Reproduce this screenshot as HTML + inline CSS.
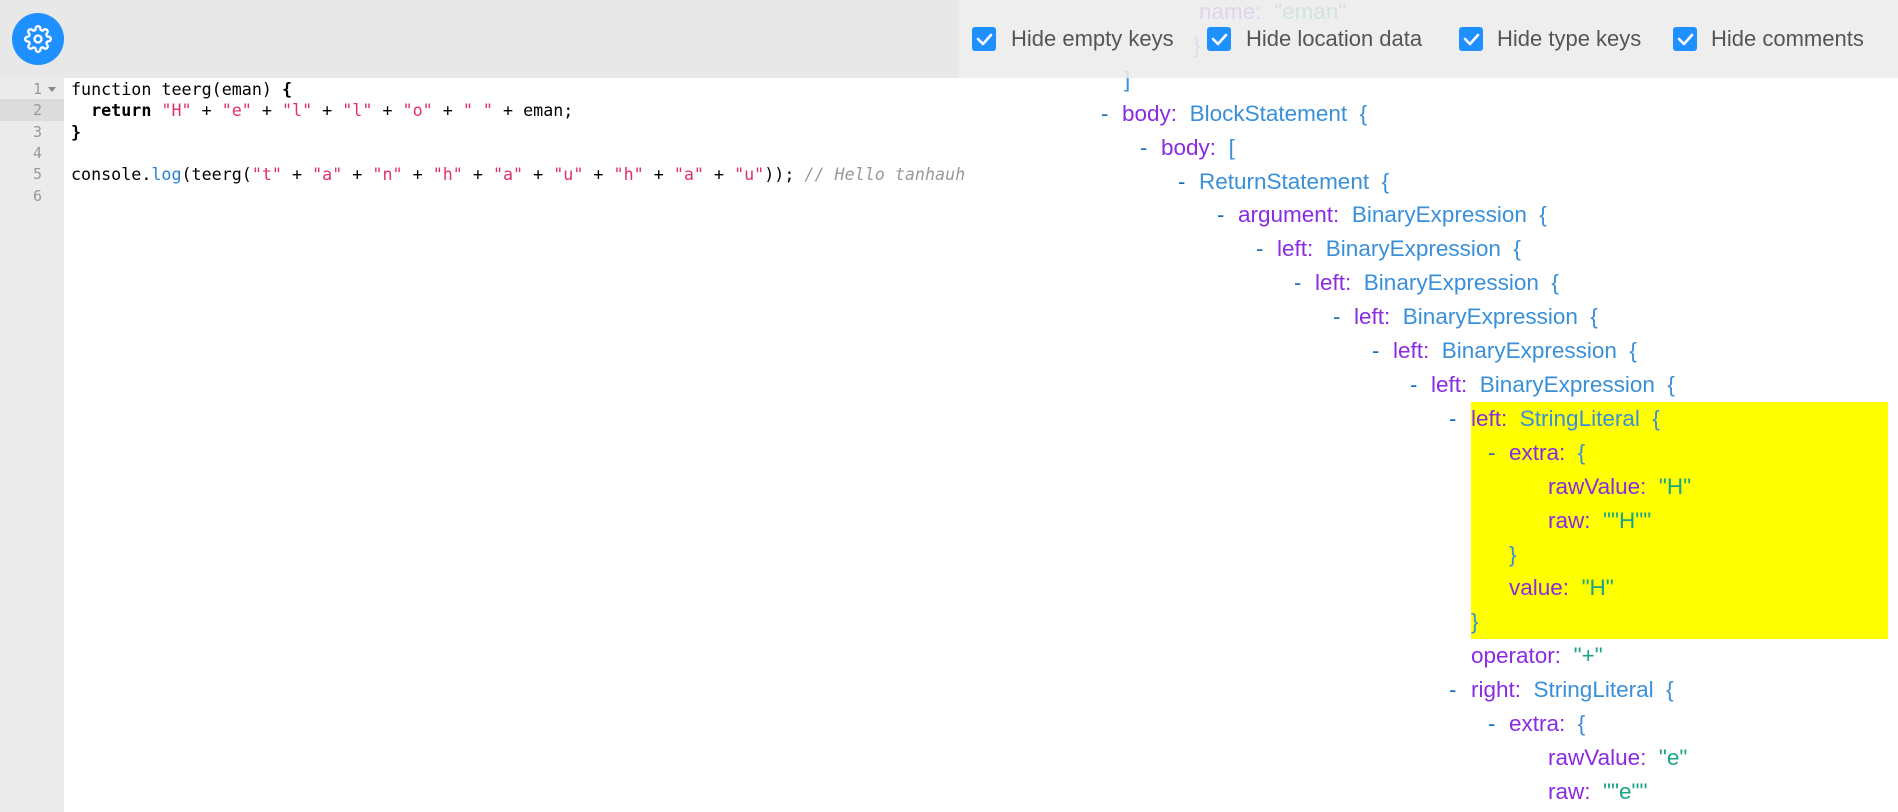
<!DOCTYPE html>
<html><head><meta charset="utf-8"><style>
*{margin:0;padding:0;box-sizing:border-box}
body{width:1898px;height:812px;overflow:hidden;background:#fff;position:relative;font-family:"Liberation Sans",sans-serif}
.topl{position:absolute;left:0;top:0;width:959px;height:78px;background:#e8e8e8;z-index:5}
.topr{position:absolute;left:959px;top:0;width:939px;height:78px;background:rgba(236,236,236,0.88);z-index:5}
.gear{position:absolute;left:12px;top:13px;width:52px;height:52px;border-radius:50%;background:#1e90ff;z-index:6;display:flex;align-items:center;justify-content:center}
.gut{position:absolute;left:0;top:78px;width:64px;height:734px;background:#ebebeb}
.ln{position:absolute;left:0;width:42px;text-align:right;font:15px "DejaVu Sans Mono",monospace;color:#999;height:21.3px;line-height:21.3px}
.code{position:absolute;left:71px;font:16.7px "DejaVu Sans Mono",monospace;color:#000;white-space:pre;height:21.3px;line-height:22.5px}
.s{color:#e0306a}.b{font-weight:bold}.f{color:#2a7fd4}.c{color:#999;font-style:italic}
.cb{position:absolute;top:27px;width:24px;height:24px;background:#1e90ff;border-radius:3px;z-index:6}
.lb{position:absolute;top:24px;font-size:22px;color:#555;z-index:6;line-height:30px}
.r{position:absolute;height:34px;line-height:36px;font-size:22.5px;white-space:pre}
.d{position:absolute;color:#1f6fb5;font-size:22px;height:34px;line-height:36px}
.k{color:#8a2be2}.t{color:#3a8fd9}.v{color:#1aa58a}.p{color:#3a8fd9}
.hl{position:absolute;left:1471px;top:402px;width:417px;height:237px;background:#ffff00}
</style></head><body>
<div class="topl"></div><div class="topr"></div>
<div class="gear"><svg width="28" height="28" viewBox="0 0 24 24" fill="none" stroke="#fff" stroke-width="2" stroke-linecap="round" stroke-linejoin="round"><circle cx="12" cy="12" r="3"/><path d="M19.4 15a1.65 1.65 0 0 0 .33 1.82l.06.06a2 2 0 1 1-2.830 2.83l-.06-.06a1.65 1.65 0 0 0-1.82-.33 1.65 1.65 0 0 0-1 1.51V21a2 2 0 1 1-4 0v-.09A1.65 1.65 0 0 0 9 19.4a1.65 1.65 0 0 0-1.82.33l-.06.06a2 2 0 1 1-2.83-2.83l.06-.06a1.65 1.65 0 0 0 .33-1.82 1.65 1.65 0 0 0-1.51-1H3a2 2 0 1 1 0-4h.09A1.65 1.65 0 0 0 4.6 9a1.65 1.65 0 0 0-.33-1.82l-.06-.06a2 2 0 1 1 2.83-2.83l.06.06a1.65 1.65 0 0 0 1.82.33H9a1.65 1.65 0 0 0 1-1.51V3a2 2 0 1 1 4 0v.09a1.65 1.65 0 0 0 1 1.51 1.65 1.65 0 0 0 1.82-.33l.06-.06a2 2 0 1 1 2.83 2.83l-.06.06a1.65 1.65 0 0 0-.33 1.82V9a1.65 1.65 0 0 0 1.51 1H21a2 2 0 1 1 0 4h-.09a1.65 1.65 0 0 0-1.51 1z"/></svg></div>

<div class="gut"></div>
<div style="position:absolute;left:0;top:99.3px;width:64px;height:21.3px;background:#dcdcdc"></div>
<div class="ln" style="top:79px">1</div><div style="position:absolute;left:48px;top:87px;border-left:4px solid transparent;border-right:4px solid transparent;border-top:5px solid #888"></div>
<div class="ln" style="top:100.3px">2</div>
<div class="ln" style="top:121.6px">3</div>
<div class="ln" style="top:142.9px">4</div>
<div class="ln" style="top:164.2px">5</div>
<div class="ln" style="top:185.5px">6</div>
<div class="code" style="top:78px">function teerg(eman) <span class="b">{</span></div>
<div class="code" style="top:99.3px">  <span class="b">return</span> <span class="s">"H"</span> + <span class="s">"e"</span> + <span class="s">"l"</span> + <span class="s">"l"</span> + <span class="s">"o"</span> + <span class="s">" "</span> + eman;</div>
<div class="code" style="top:120.6px"><span class="b">}</span></div>
<div class="code" style="top:163.2px">console.<span class="f">log</span>(teerg(<span class="s">"t"</span> + <span class="s">"a"</span> + <span class="s">"n"</span> + <span class="s">"h"</span> + <span class="s">"a"</span> + <span class="s">"u"</span> + <span class="s">"h"</span> + <span class="s">"a"</span> + <span class="s">"u"</span>)); <span class="c">// Hello tanhauh</span></div>

<svg style="position:absolute;left:0;top:0;z-index:7" width="1898" height="78">
<g fill="none" stroke="#fff" stroke-width="2.6" stroke-linecap="round" stroke-linejoin="round">
<path d="M978 39l5 5 8-9"/><path d="M1213 39l5 5 8-9"/><path d="M1465 39l5 5 8-9"/><path d="M1679 39l5 5 8-9"/></g></svg>
<div class="cb" style="left:972px"></div><div class="lb" style="left:1011px">Hide empty keys</div>
<div class="cb" style="left:1207px"></div><div class="lb" style="left:1246px">Hide location data</div>
<div class="cb" style="left:1459px"></div><div class="lb" style="left:1497px">Hide type keys</div>
<div class="cb" style="left:1673px"></div><div class="lb" style="left:1711px">Hide comments</div>

<div class="hl"></div>
<div class="r" style="left:1199px;top:-6px"><span class="k">name:</span>  <span class="v">"eman"</span></div>
<div class="r p" style="left:1193px;top:28px">}</div>
<div class="r p" style="left:1124px;top:62px">]</div>

<div class="d" style="left:1101px;top:96px">-</div><div class="r" style="left:1122px;top:96px"><span class="k">body:</span>  <span class="t">BlockStatement</span>  <span class="p">{</span></div>
<div class="d" style="left:1140px;top:130px">-</div><div class="r" style="left:1161px;top:130px"><span class="k">body:</span>  <span class="p">[</span></div>
<div class="d" style="left:1178px;top:164px">-</div><div class="r" style="left:1199px;top:164px"><span class="t">ReturnStatement</span>  <span class="p">{</span></div>
<div class="d" style="left:1217px;top:197px">-</div><div class="r" style="left:1238px;top:197px"><span class="k">argument:</span>  <span class="t">BinaryExpression</span>  <span class="p">{</span></div>
<div class="d" style="left:1256px;top:231px">-</div><div class="r" style="left:1277px;top:231px"><span class="k">left:</span>  <span class="t">BinaryExpression</span>  <span class="p">{</span></div>
<div class="d" style="left:1294px;top:265px">-</div><div class="r" style="left:1315px;top:265px"><span class="k">left:</span>  <span class="t">BinaryExpression</span>  <span class="p">{</span></div>
<div class="d" style="left:1333px;top:299px">-</div><div class="r" style="left:1354px;top:299px"><span class="k">left:</span>  <span class="t">BinaryExpression</span>  <span class="p">{</span></div>
<div class="d" style="left:1372px;top:333px">-</div><div class="r" style="left:1393px;top:333px"><span class="k">left:</span>  <span class="t">BinaryExpression</span>  <span class="p">{</span></div>
<div class="d" style="left:1410px;top:367px">-</div><div class="r" style="left:1431px;top:367px"><span class="k">left:</span>  <span class="t">BinaryExpression</span>  <span class="p">{</span></div>
<div class="d" style="left:1449px;top:401px">-</div><div class="r" style="left:1471px;top:401px"><span class="k">left:</span>  <span class="t">StringLiteral</span>  <span class="p">{</span></div>
<div class="d" style="left:1488px;top:435px">-</div><div class="r" style="left:1509px;top:435px"><span class="k">extra:</span>  <span class="p">{</span></div>
<div class="r" style="left:1548px;top:469px"><span class="k">rawValue:</span>  <span class="v">"H"</span></div>
<div class="r" style="left:1548px;top:503px"><span class="k">raw:</span>  <span class="v">""H""</span></div>
<div class="r p" style="left:1509px;top:537px">}</div>
<div class="r" style="left:1509px;top:570px"><span class="k">value:</span>  <span class="v">"H"</span></div>
<div class="r p" style="left:1471px;top:604px">}</div>
<div class="r" style="left:1471px;top:638px"><span class="k">operator:</span>  <span class="v">"+"</span></div>
<div class="d" style="left:1449px;top:672px">-</div><div class="r" style="left:1471px;top:672px"><span class="k">right:</span>  <span class="t">StringLiteral</span>  <span class="p">{</span></div>
<div class="d" style="left:1488px;top:706px">-</div><div class="r" style="left:1509px;top:706px"><span class="k">extra:</span>  <span class="p">{</span></div>
<div class="r" style="left:1548px;top:740px"><span class="k">rawValue:</span>  <span class="v">"e"</span></div>
<div class="r" style="left:1548px;top:774px"><span class="k">raw:</span>  <span class="v">""e""</span></div>
</body></html>
